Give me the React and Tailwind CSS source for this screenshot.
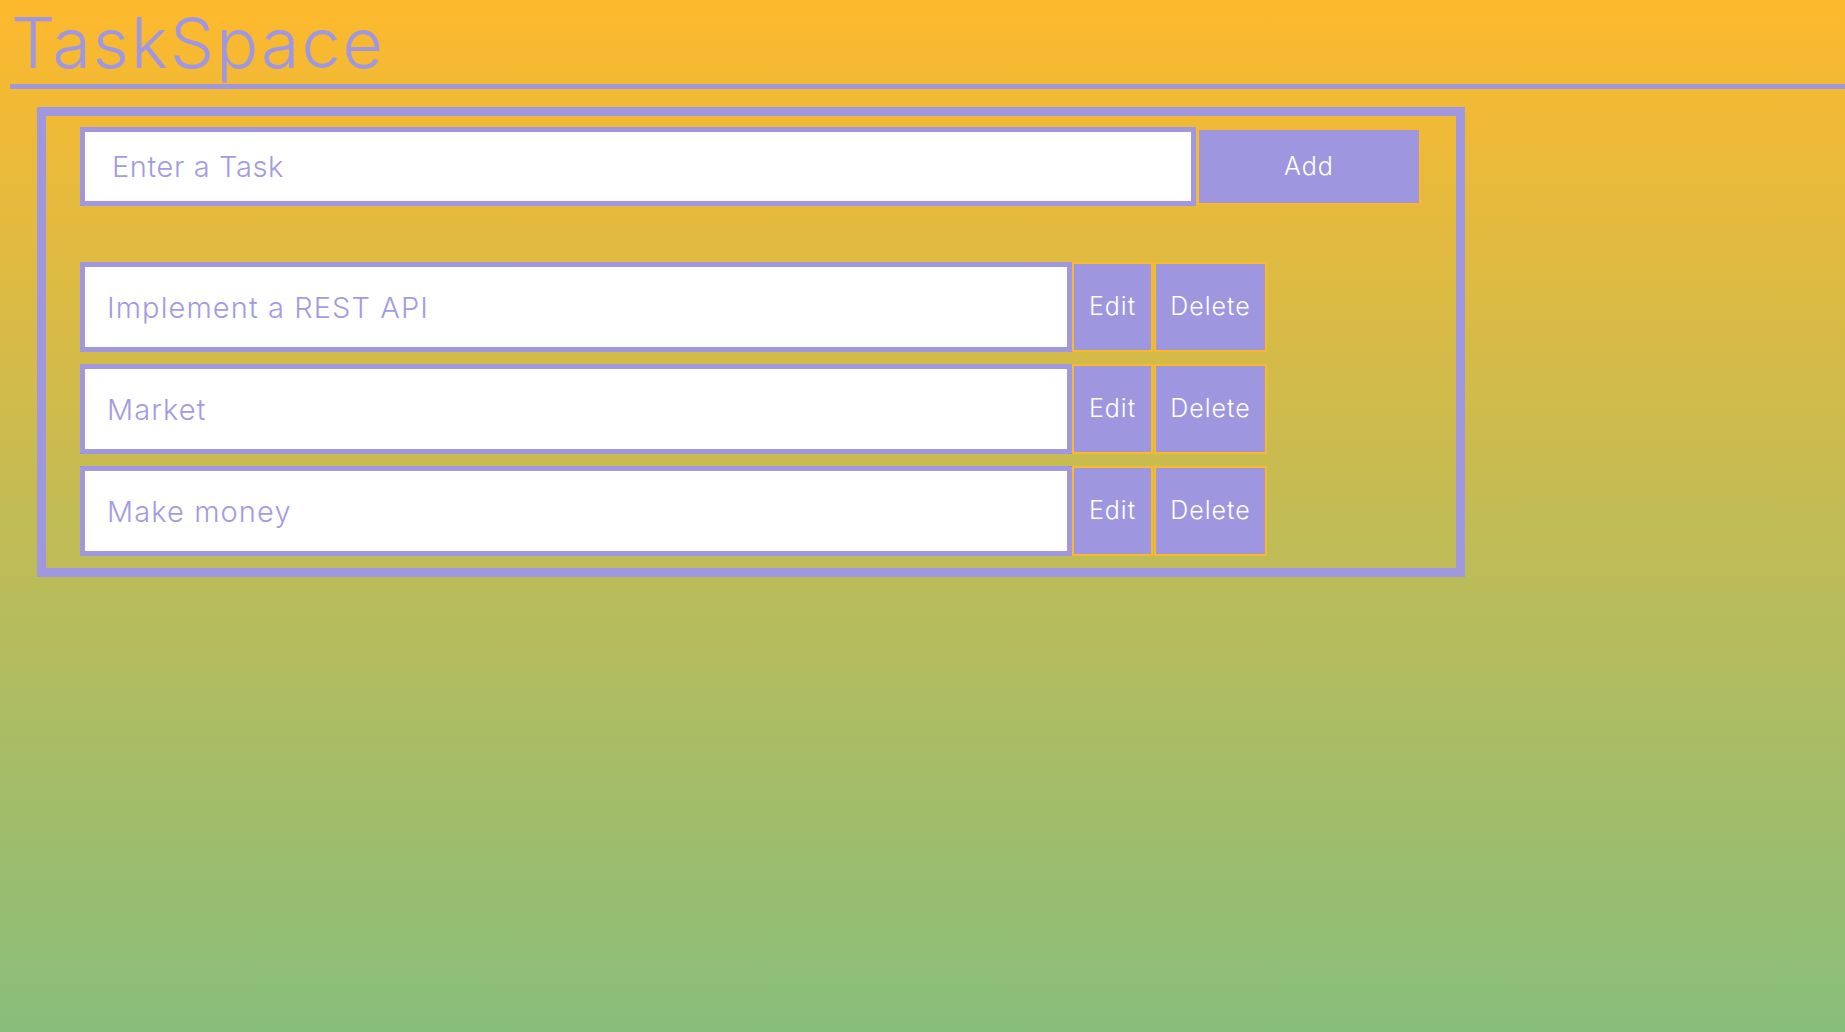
import React from "react";

const tasks = ["Implement a REST API", "Market", "Make money"];

export default function App() {
  return (
    <div
      className="min-h-screen w-full bg-[linear-gradient(#fdb92d,#88be7b)] font-['Inter','Noto_Sans',sans-serif] overflow-hidden"
    >
      <header className="ml-[10px] border-b-[5px] border-[#9f98e0]">
        <h1 className="pl-[1px] text-[70px] leading-[85px] h-[84px] font-light text-[#9f98e0] tracking-[2px]">
          TaskSpace
        </h1>
      </header>

      <main className="ml-[37px] mt-[18px] w-[1428px] border-[9px] border-[#9f98e0] pt-[11px] pl-[34px] pb-[12px]">
        <form
          className="flex gap-[1px]"
          onSubmit={(e) => e.preventDefault()}
        >
          <input
            type="text"
            placeholder="Enter a Task"
            className="w-[1116px] h-[79px] bg-white border-[5px] border-[#9f98e0] pl-[27px] text-[29px] font-light tracking-[0.6px] text-[#9f98e0] placeholder:text-[#a29be3] outline-none"
          />
          <button
            type="submit"
            className="mt-[1px] w-[224px] h-[77px] bg-[#9e97e0] border-2 border-[#fbb829] text-white text-[25px] font-light tracking-[1px]"
          >
            Add
          </button>
        </form>

        <ul className="mt-[56px] flex flex-col gap-[12px]">
          {tasks.map((t) => (
            <li key={t} className="flex gap-0">
              <input
                type="text"
                readOnly
                defaultValue={t}
                className="w-[992px] h-[90px] bg-white border-[5px] border-[#9f98e0] pl-[22px] text-[29px] font-light tracking-[1.1px] text-[#a29be3] outline-none"
              />
              <button className="h-[90px] w-[81px] bg-[#9e97e0] border-2 border-[#fbb829] text-white text-[25px] font-light tracking-[1px]">
                Edit
              </button>
              <button className="ml-[1px] h-[90px] w-[113px] bg-[#9e97e0] border-2 border-[#fbb829] text-white text-[25px] font-light tracking-[1px]">
                Delete
              </button>
            </li>
          ))}
        </ul>
      </main>
    </div>
  );
}
